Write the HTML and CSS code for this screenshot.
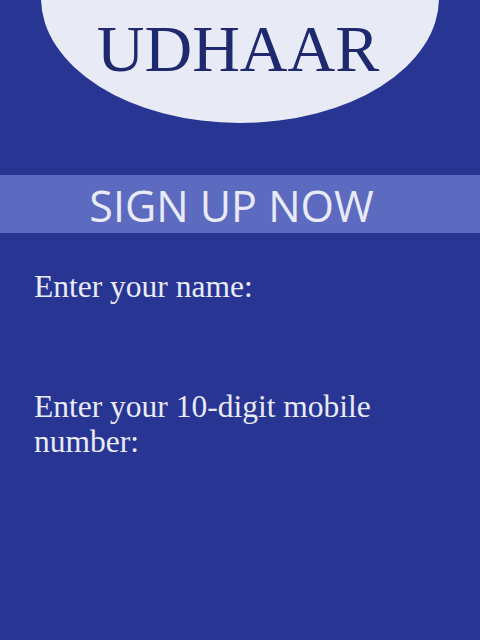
FILE: index.html
```html
<!DOCTYPE html>
<html>
<head>
<meta charset="utf-8">
<link rel="stylesheet" href="styles.css">
</head>
<body>
<header class="logo">
  <h1 class="logo-title">UDHAAR</h1>
</header>
<div class="banner">SIGN UP NOW</div>
<form class="signup">
  <label class="field">
    <span class="field-label">Enter your name:</span>
    <input class="field-input" type="text">
  </label>
  <label class="field">
    <span class="field-label">Enter your 10-digit mobile number:</span>
    <input class="field-input" type="tel">
  </label>
</form>
</body>
</html>
```
FILE: styles.css
```css
html, body {
  margin: 0;
  padding: 0;
}
body {
  background: #283593;
  width: 480px;
  height: 640px;
  overflow: hidden;
}
.logo {
  box-sizing: border-box;
  width: 398px;
  height: 250px;
  margin: -127px auto 0;
  padding-top: 142px;
  border-radius: 50%;
  background: #e8eaf6;
  text-align: center;
}
.logo-title {
  margin: 0;
  font-family: "Liberation Serif", serif;
  font-weight: normal;
  font-size: 66px;
  line-height: 67px;
  color: #1f2a6e;
  padding-right: 4px;
}
.banner {
  margin-top: 52px;
  height: 58px;
  background: #5c6bc0;
  color: #e8eaf6;
  font-family: "Open Sans", sans-serif;
  font-size: 43px;
  display: flex;
  align-items: center;
  justify-content: center;
  padding-top: 2px;
  padding-right: 17px;
  box-sizing: border-box;
}
.signup {
  padding: 36px 34px 0;
  display: flex;
  flex-direction: column;
  gap: 15px;
}
.field {
  display: flex;
  flex-direction: column;
}
.field-label {
  font-family: "Liberation Serif", serif;
  font-size: 31.5px;
  line-height: 35px;
  color: #e8eaf6;
}
.field-input {
  height: 70px;
  margin: 0;
  padding: 0;
  border: none;
  background: transparent;
  outline: none;
}
```
